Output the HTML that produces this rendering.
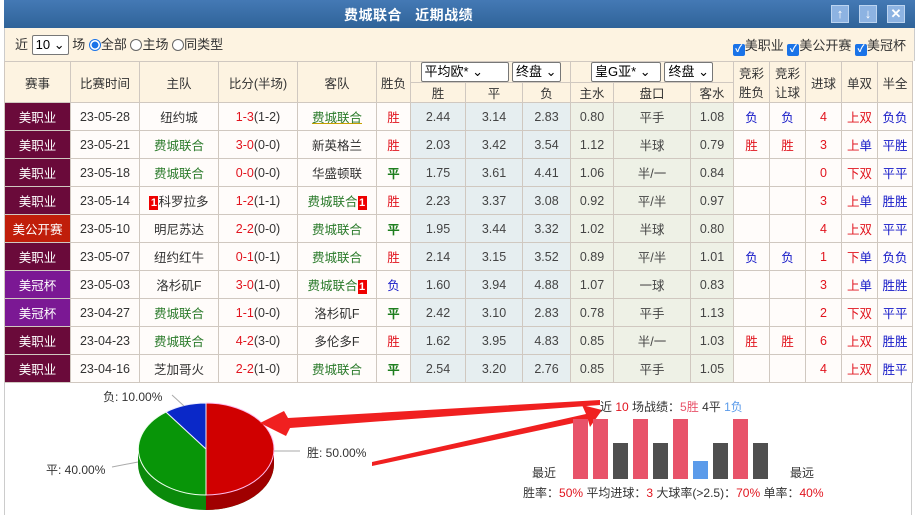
<!DOCTYPE html>
<html><head><meta charset="utf-8"><style>
*{box-sizing:border-box;margin:0;padding:0}
body{width:915px;height:515px;overflow:hidden;background:#fff;font-family:"Liberation Sans","Noto Sans CJK SC",sans-serif;font-size:12px;color:#333;position:relative}
.top{position:absolute;left:4px;top:0;width:911px;height:28px;background:linear-gradient(#4479b5,#2f6399);color:#fff;font-weight:bold;font-size:14px}
.top .t{position:absolute;left:340px;top:5px;letter-spacing:0.5px}
.btn{position:absolute;top:5px;width:18px;height:18px;background:#8db3e2;border:1px solid #bcd4f0;color:#fff;font-size:13px;text-align:center;line-height:16px;font-weight:bold}
.filt{position:absolute;left:4px;top:28px;width:911px;height:33px;background:#fdf3e1;border-left:1px solid #ccc;border-right:1px solid #ccc}
.sel{display:inline-block;border:1px solid #777;background:#fff;border-radius:2px;padding:0 3px;height:20px;line-height:18px;font-size:13px;color:#000}
.rad{display:inline-block;width:12px;height:12px;border:1px solid #666;border-radius:50%;vertical-align:-2px;background:#fff}
.rad.on{border-color:#1a73e8;background:radial-gradient(#1a73e8 45%,#fff 50%)}
.cb{display:inline-block;width:12px;height:12px;background:#1a73e8;border-radius:2px;color:#fff;font-size:10px;line-height:12px;text-align:center;vertical-align:-2px;font-weight:bold}
table{position:absolute;left:4px;top:61px;border-collapse:collapse;table-layout:fixed;width:908px}
td,th{border:1px solid #d0c8c0;text-align:center;font-weight:normal;font-size:12.5px;white-space:nowrap;overflow:hidden}
th{background:#fdf3e1;color:#333}
tr.d td{height:28px;background:#fffcfa}
td.lg{color:#fff;background:#6a0a3a!important}
td.lg2{color:#fff;background:#c01e0a!important}
td.lg3{color:#fff;background:#7b1894!important}
td.o{background:#e6eef0!important;color:#444}
td.a{background:#eef1e6!important;color:#444}
.r{color:#e1141e}.g{color:#2a7a2a}.b{color:#1418c8}.gr{color:#1e7e1e;font-weight:bold}
.card{display:inline-block;background:#e00;color:#fff;font-size:11px;width:9px;line-height:14px;font-weight:bold}
.u{text-decoration:underline;text-decoration-color:#c8a000}
.chart{position:absolute;left:4px;top:382px;width:908px;height:133px;border-left:1px solid #ccc;border-right:1px solid #ccc}
.lbl{position:absolute;font-size:12px;color:#333;white-space:nowrap}
</style></head><body>
<div class="top"><span class="t">费城联合&nbsp;&nbsp;&nbsp;近期战绩</span>
<div class="btn" style="left:827px">↑</div><div class="btn" style="left:855px">↓</div><div class="btn" style="left:883px">✕</div></div>
<div class="filt">
<div style="position:absolute;left:10px;top:6px;font-size:13px;white-space:nowrap">近 <span class="sel">10 ⌄</span> 场 <span class="rad on"></span>全部 <span class="rad"></span>主场 <span class="rad"></span>同类型</div>
<div style="position:absolute;right:8px;top:7px;font-size:13px;white-space:nowrap"><span class="cb">✓</span>美职业 <span class="cb">✓</span>美公开赛 <span class="cb">✓</span>美冠杯</div>
</div>
<table>
<colgroup><col style="width:66px"><col style="width:69px"><col style="width:79px"><col style="width:79px"><col style="width:79px"><col style="width:34px"><col style="width:55px"><col style="width:57px"><col style="width:48px"><col style="width:43px"><col style="width:77px"><col style="width:43px"><col style="width:36px"><col style="width:36px"><col style="width:36px"><col style="width:36px"><col style="width:35px"></colgroup>
<tr><th rowspan="2" style="height:41px">赛事</th><th rowspan="2">比赛时间</th><th rowspan="2">主队</th><th rowspan="2">比分(半场)</th><th rowspan="2">客队</th><th rowspan="2">胜负</th>
<th colspan="3" style="height:21px"><span class="sel" style="width:88px;text-align:left">平均欧* ⌄</span> <span class="sel">终盘 ⌄</span></th>
<th colspan="3"><span class="sel" style="width:70px;text-align:left">皇G亚* ⌄</span> <span class="sel">终盘 ⌄</span></th>
<th rowspan="2">竞彩<br>胜负</th><th rowspan="2">竞彩<br>让球</th><th rowspan="2">进球</th><th rowspan="2">单双</th><th rowspan="2">半全</th></tr>
<tr><th style="height:20px">胜</th><th>平</th><th>负</th><th>主水</th><th>盘口</th><th>客水</th></tr>
<tr class="d"><td class="lg">美职业</td><td>23-05-28</td><td>纽约城</td><td><span class="r">1-3</span>(1-2)</td><td class="g u">费城联合</td><td class="r">胜</td><td class="o">2.44</td><td class="o">3.14</td><td class="o">2.83</td><td class="a">0.80</td><td class="a">平手</td><td class="a">1.08</td><td class="b">负</td><td class="b">负</td><td class="r">4</td><td class="r">上双</td><td class="b">负负</td></tr>
<tr class="d"><td class="lg">美职业</td><td>23-05-21</td><td class="g">费城联合</td><td><span class="r">3-0</span>(0-0)</td><td>新英格兰</td><td class="r">胜</td><td class="o">2.03</td><td class="o">3.42</td><td class="o">3.54</td><td class="a">1.12</td><td class="a">半球</td><td class="a">0.79</td><td class="r">胜</td><td class="r">胜</td><td class="r">3</td><td><span class="r">上</span><span class="b">单</span></td><td class="b">平胜</td></tr>
<tr class="d"><td class="lg">美职业</td><td>23-05-18</td><td class="g">费城联合</td><td><span class="r">0-0</span>(0-0)</td><td>华盛顿联</td><td class="gr">平</td><td class="o">1.75</td><td class="o">3.61</td><td class="o">4.41</td><td class="a">1.06</td><td class="a">半/一</td><td class="a">0.84</td><td></td><td></td><td class="r">0</td><td class="r">下双</td><td class="b">平平</td></tr>
<tr class="d"><td class="lg">美职业</td><td>23-05-14</td><td><span class="card">1</span>科罗拉多</td><td><span class="r">1-2</span>(1-1)</td><td class="g">费城联合<span class="card">1</span></td><td class="r">胜</td><td class="o">2.23</td><td class="o">3.37</td><td class="o">3.08</td><td class="a">0.92</td><td class="a">平/半</td><td class="a">0.97</td><td></td><td></td><td class="r">3</td><td><span class="r">上</span><span class="b">单</span></td><td class="b">胜胜</td></tr>
<tr class="d"><td class="lg2">美公开赛</td><td>23-05-10</td><td>明尼苏达</td><td><span class="r">2-2</span>(0-0)</td><td class="g">费城联合</td><td class="gr">平</td><td class="o">1.95</td><td class="o">3.44</td><td class="o">3.32</td><td class="a">1.02</td><td class="a">半球</td><td class="a">0.80</td><td></td><td></td><td class="r">4</td><td class="r">上双</td><td class="b">平平</td></tr>
<tr class="d"><td class="lg">美职业</td><td>23-05-07</td><td>纽约红牛</td><td><span class="r">0-1</span>(0-1)</td><td class="g">费城联合</td><td class="r">胜</td><td class="o">2.14</td><td class="o">3.15</td><td class="o">3.52</td><td class="a">0.89</td><td class="a">平/半</td><td class="a">1.01</td><td class="b">负</td><td class="b">负</td><td class="r">1</td><td><span class="r">下</span><span class="b">单</span></td><td class="b">负负</td></tr>
<tr class="d"><td class="lg3">美冠杯</td><td>23-05-03</td><td>洛杉矶F</td><td><span class="r">3-0</span>(1-0)</td><td class="g">费城联合<span class="card">1</span></td><td class="b">负</td><td class="o">1.60</td><td class="o">3.94</td><td class="o">4.88</td><td class="a">1.07</td><td class="a">一球</td><td class="a">0.83</td><td></td><td></td><td class="r">3</td><td><span class="r">上</span><span class="b">单</span></td><td class="b">胜胜</td></tr>
<tr class="d"><td class="lg3">美冠杯</td><td>23-04-27</td><td class="g">费城联合</td><td><span class="r">1-1</span>(0-0)</td><td>洛杉矶F</td><td class="gr">平</td><td class="o">2.42</td><td class="o">3.10</td><td class="o">2.83</td><td class="a">0.78</td><td class="a">平手</td><td class="a">1.13</td><td></td><td></td><td class="r">2</td><td class="r">下双</td><td class="b">平平</td></tr>
<tr class="d"><td class="lg">美职业</td><td>23-04-23</td><td class="g">费城联合</td><td><span class="r">4-2</span>(3-0)</td><td>多伦多F</td><td class="r">胜</td><td class="o">1.62</td><td class="o">3.95</td><td class="o">4.83</td><td class="a">0.85</td><td class="a">半/一</td><td class="a">1.03</td><td class="r">胜</td><td class="r">胜</td><td class="r">6</td><td class="r">上双</td><td class="b">胜胜</td></tr>
<tr class="d"><td class="lg">美职业</td><td>23-04-16</td><td>芝加哥火</td><td><span class="r">2-2</span>(1-0)</td><td class="g">费城联合</td><td class="gr">平</td><td class="o">2.54</td><td class="o">3.20</td><td class="o">2.76</td><td class="a">0.85</td><td class="a">平手</td><td class="a">1.05</td><td></td><td></td><td class="r">4</td><td class="r">上双</td><td class="b">胜平</td></tr>
</table>
<div class="chart"></div>
<svg style="position:absolute;left:0;top:0" width="915" height="515">
<path d="M138,449 A68,46 0 0 0 274,449 L274,464 A68,46 0 0 1 138,464 Z" fill="#0b8a0b"/>
<path d="M206,495 A68,46 0 0 0 274,449 L274,464 A68,46 0 0 1 206,510 Z" fill="#a00000"/>
<path d="M206,449 L206,403 A68,46 0 0 1 206,495 Z" fill="#d00000" stroke="#fbe" stroke-width="1"/>
<path d="M206,449 L206,495 A68,46 0 0 1 166,412 Z" fill="#089508" stroke="#efe" stroke-width="1"/>
<path d="M206,449 L166,412 A68,46 0 0 1 206,403 Z" fill="#0a28c8" stroke="#eef" stroke-width="1"/>
<path d="M274,451 L300,451 M112,467 L138,462 M172,395 L184,406" stroke="#aaa" fill="none"/>
<polygon points="600,400 600,405 290,428 286,436 260,423 284,411 288,418" fill="#f02020"/>
<polygon points="372,466 372,462 586,414 582,405 602,410 590,427 588,420" fill="#f02020"/>
<g>
<rect x="573" y="419" width="15" height="60" fill="#e8536a"/>
<rect x="593" y="419" width="15" height="60" fill="#e8536a"/>
<rect x="613" y="443" width="15" height="36" fill="#4f4f4f"/>
<rect x="633" y="419" width="15" height="60" fill="#e8536a"/>
<rect x="653" y="443" width="15" height="36" fill="#4f4f4f"/>
<rect x="673" y="419" width="15" height="60" fill="#e8536a"/>
<rect x="693" y="461" width="15" height="18" fill="#5b9bea"/>
<rect x="713" y="443" width="15" height="36" fill="#4f4f4f"/>
<rect x="733" y="419" width="15" height="60" fill="#e8536a"/>
<rect x="753" y="443" width="15" height="36" fill="#4f4f4f"/>
</g>
</svg>
<div class="lbl" style="left:103px;top:388px">负: 10.00%</div>
<div class="lbl" style="left:46px;top:461px">平: 40.00%</div>
<div class="lbl" style="left:307px;top:444px">胜: 50.00%</div>
<div class="lbl" style="left:600px;top:398px">近 <span class="r">10</span> 场战绩：<span style="color:#e8536a">5胜</span> 4平 <span style="color:#5b9bea">1负</span></div>
<div class="lbl" style="left:532px;top:464px">最近</div>
<div class="lbl" style="left:790px;top:464px">最远</div>
<div class="lbl" style="left:523px;top:484px">胜率：<span class="r">50%</span> 平均进球：<span class="r">3</span> 大球率(&gt;2.5)：<span class="r">70%</span> 单率：<span class="r">40%</span></div>
</body></html>
